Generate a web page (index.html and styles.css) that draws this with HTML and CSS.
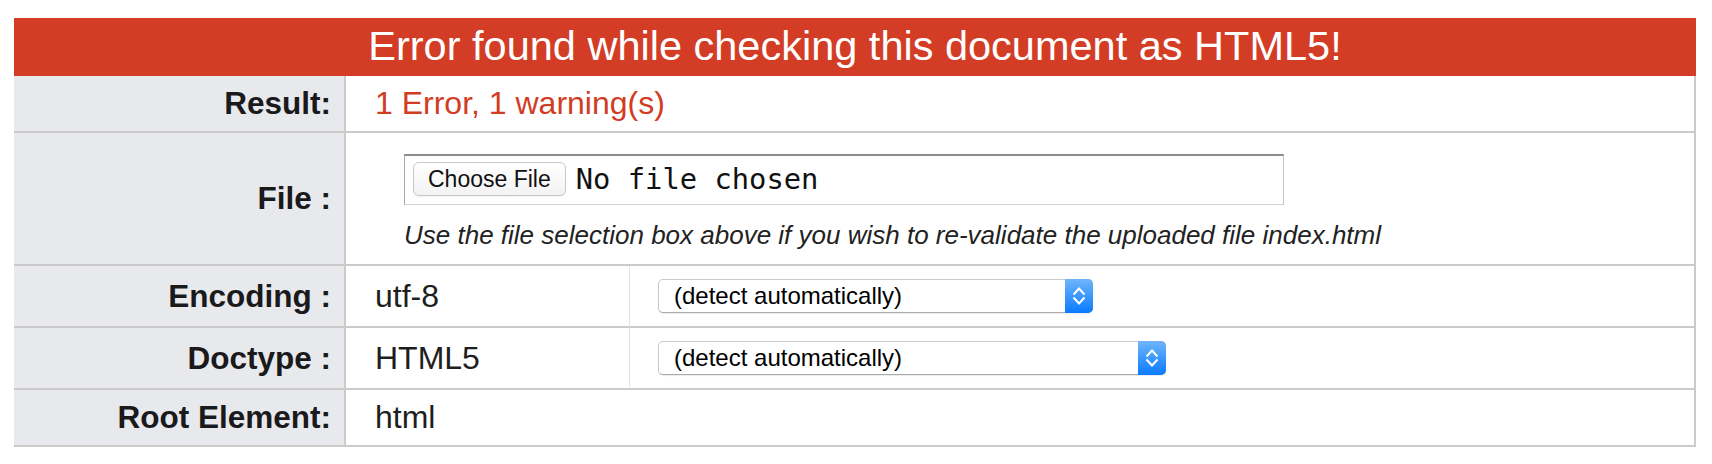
FILE: index.html
```html
<!DOCTYPE html>
<html lang="en">
<head>
<meta charset="utf-8">
<title>Validation result</title>
<link rel="stylesheet" href="styles.css">
</head>
<body>
<div class="page">
  <div class="results">
    <div class="banner">Error found while checking this document as HTML5!</div>

    <div class="cell label">Result:</div>
    <div class="cell value wide invalid">1 Error, 1 warning(s)</div>

    <div class="cell label">File :</div>
    <div class="cell wide file-cell">
      <div class="filebox">
        <span class="btn">Choose File</span>
        <span class="nofile">No file chosen</span>
      </div>
      <p class="hint">Use the file selection box above if you wish to re-validate the uploaded file index.html</p>
    </div>

    <div class="cell label">Encoding :</div>
    <div class="cell value divided">utf-8</div>
    <div class="cell sel-cell">
      <div class="select enc">
        <span class="sel-text">(detect automatically)</span>
        <span class="sel-arrow"><svg width="14" height="20" viewBox="0 0 14 20"><path d="M1.5 8.5 L7 2.5 L12.5 8.5 M1.5 11.5 L7 17.5 L12.5 11.5" fill="none" stroke="#fff" stroke-width="2"/></svg></span>
      </div>
    </div>

    <div class="cell label">Doctype :</div>
    <div class="cell value divided">HTML5</div>
    <div class="cell sel-cell">
      <div class="select doc">
        <span class="sel-text">(detect automatically)</span>
        <span class="sel-arrow"><svg width="14" height="20" viewBox="0 0 14 20"><path d="M1.5 8.5 L7 2.5 L12.5 8.5 M1.5 11.5 L7 17.5 L12.5 11.5" fill="none" stroke="#fff" stroke-width="2"/></svg></span>
      </div>
    </div>

    <div class="cell label">Root Element:</div>
    <div class="cell value wide">html</div>
  </div>
</div>
</body>
</html>
```

FILE: styles.css
```css
html, body {
  margin: 0;
  background: #ffffff;
}

.page {
  padding: 18px 0 0 14px;
  font-family: "Liberation Sans", Arial, Helvetica, sans-serif;
}

.results {
  display: grid;
  width: 1682px;
  grid-template-columns: 332px 284px 1fr;
  grid-template-rows: 58px 57px 133px 62px 62px 57px;
}

.banner {
  grid-column: 1 / -1;
  box-sizing: border-box;
  height: 58px;
  background: #d43d25;
  color: #ffffff;
  font-size: 41.5px;
  line-height: 56px;
  padding-bottom: 2px;
  text-align: center;
}

.cell {
  box-sizing: border-box;
  border-bottom: 2px solid #cbcbcb;
  background: #ffffff;
}

.label {
  display: flex;
  align-items: center;
  justify-content: flex-end;
  padding-right: 13px;
  background: #e8e9ec;
  border-right: 2px solid #cbcbcb;
  font-weight: bold;
  font-size: 31.5px;
  color: #1a1a1c;
}

.value {
  display: flex;
  align-items: center;
  padding-left: 29px;
  font-size: 32px;
  color: #1e1e1e;
}

.wide {
  grid-column: span 2;
  border-right: 2px solid #cbcbcb;
}

.invalid {
  color: #d23c24;
}

.divided {
  border-right: 1px solid #e4e4e4;
}

.file-cell {
  padding: 21px 0 0 58px;
}

.filebox {
  box-sizing: border-box;
  width: 880px;
  height: 51px;
  display: flex;
  align-items: flex-start;
  background: #ffffff;
  border-top: 2px solid #8c8c8c;
  border-left: 1px solid #a8a8a8;
  border-right: 1px solid #c4c4c4;
  border-bottom: 1px solid #d2d2d2;
}

.btn {
  box-sizing: border-box;
  display: inline-flex;
  align-items: center;
  height: 34px;
  margin: 6px 0 0 8px;
  padding: 1px 14px 0 14px;
  border: 1px solid #c8c8c8;
  border-radius: 6px;
  background: linear-gradient(#ffffff, #f3f3f3);
  box-shadow: 0 1px 1px rgba(0, 0, 0, 0.06);
  font-size: 23px;
  line-height: 1;
  color: #111111;
}

.nofile {
  margin: 6px 0 0 10px;
  font-family: "DejaVu Sans Mono", "Liberation Mono", monospace;
  font-size: 28.8px;
  line-height: 34px;
  color: #111111;
}

.hint {
  margin: 15px 0 0 0;
  font-style: italic;
  font-size: 26px;
  line-height: 30px;
  color: #222222;
}

.sel-cell {
  display: flex;
  align-items: center;
  padding-left: 28px;
  border-right: 2px solid #cbcbcb;
}

.select {
  box-sizing: border-box;
  display: flex;
  height: 34px;
  background: #ffffff;
  border: 1px solid #cacaca;
  border-bottom-color: #ababab;
  border-radius: 5px;
  box-shadow: 0 1px 1px rgba(0, 0, 0, 0.08);
}

.enc {
  width: 435px;
}

.doc {
  width: 508px;
}

.sel-text {
  flex: 1;
  display: flex;
  align-items: center;
  padding-left: 15px;
  font-size: 24px;
  color: #000000;
}

.sel-arrow {
  width: 28px;
  margin: -1px -1px -1px 0;
  display: flex;
  align-items: center;
  justify-content: center;
  background: linear-gradient(#6fb5fb, #0a7bff);
  border-radius: 0 5px 5px 0;
}

.sel-arrow svg {
  display: block;
}
```
